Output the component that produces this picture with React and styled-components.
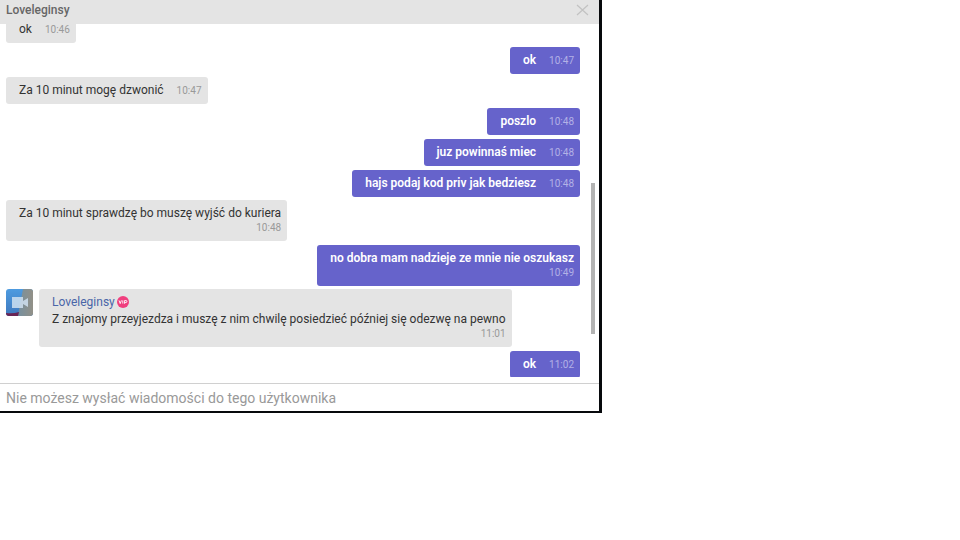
import React from "react";
import styled, { createGlobalStyle } from "styled-components";

const GlobalStyle = createGlobalStyle`
  * {
    box-sizing: border-box;
  }

  body {
    margin: 0;
    background: #fff;
    font-family: Roboto, "Noto Sans", sans-serif;
    font-size: 12px;
    line-height: 16px;
  }
`;

// chat window
const ChatWindow = styled.main`
  display: flex;
  flex-direction: column;
  width: 100%;
  max-width: 602px;
  background: #fff;
  border-right: 3px solid #07090c;
  border-bottom: 2px solid #07090c;
`;

const Header = styled.header`
  position: relative;
  z-index: 1;
  display: flex;
  align-items: center;
  justify-content: space-between;
  height: 24px;
  padding: 0 10px 4px 6px;
  background: #e4e4e4;
`;

const Title = styled.h1`
  margin: 0;
  color: #666;
  font-size: 12px;
  font-weight: 500;
`;

const CloseButton = styled.button`
  display: flex;
  padding: 0;
  border: 0;
  background: none;
  color: #c2c2c2;
  cursor: pointer;
`;

const Viewport = styled.section`
  position: relative;
  margin-bottom: 6px;
  clip-path: inset(-8px 0 0);
`;

// scrolled a little, so the first bubble slides under the header
const MessageList = styled.ul`
  display: flex;
  flex-direction: column;
  gap: 4px;
  margin: -7px 0 -1px;
  padding: 0 19px 0 6px;
  list-style: none;
`;

const ScrollThumb = styled.div`
  position: absolute;
  top: 45%;
  right: 4px;
  bottom: 43px;
  width: 4px;
  background: #b3b3b3;
`;

const MessageRow = styled.li`
  display: flex;
  align-items: flex-start;
  gap: 6px;
  justify-content: ${(props) => (props.$own ? "flex-end" : "flex-start")};
  margin-top: ${(props) => (props.$own ? "0" : "-1px")};
`;

const Bubble = styled.div`
  display: flex;
  flex-direction: ${(props) => (props.$stacked ? "column" : "row")};
  column-gap: 13px;
  padding: 5px 6px 6px 13px;
  border-radius: 3px;
  background: ${(props) => (props.$own ? "#6663cb" : "#e4e4e4")};
  color: ${(props) => (props.$own ? "#fff" : "#333")};
  font-weight: ${(props) => (props.$own ? 600 : 400)};
`;

const Text = styled.p`
  margin: 0;
`;

const Time = styled.time`
  align-self: flex-end;
  height: ${(props) => (props.$stacked ? "14px" : "16px")};
  color: ${(props) => (props.$own ? "#b3b1e6" : "#999")};
  font-size: 10px;
  font-weight: 400;
  line-height: ${(props) => (props.$stacked ? "14px" : "18px")};
`;

const Author = styled.div`
  display: flex;
  align-items: center;
  gap: 2px;
  height: 17px;
  padding-bottom: 2px;
  color: #4a66a8;
`;

const Avatar = styled.svg`
  flex: none;
  border-radius: 3px;
`;

const Composer = styled.footer`
  border-top: 1px solid #d0d0d0;
`;

const MessageInput = styled.input`
  display: block;
  width: 100%;
  height: 27px;
  padding: 0 6px;
  border: 0;
  background: #fff;
  font: 14px Roboto, "Noto Sans", sans-serif;

  &::placeholder {
    color: #999;
    opacity: 1;
  }
`;

const messages = [
  { text: "ok", time: "10:46" },
  { text: "ok", time: "10:47", own: true },
  { text: "Za 10 minut mogę dzwonić", time: "10:47" },
  { text: "poszlo", time: "10:48", own: true },
  { text: "juz powinnaś miec", time: "10:48", own: true },
  { text: "hajs podaj kod priv jak bedziesz", time: "10:48", own: true },
  {
    text: "Za 10 minut sprawdzę bo muszę wyjść do kuriera",
    time: "10:48",
    stacked: true,
  },
  {
    text: "no dobra mam nadzieje ze mnie nie oszukasz",
    time: "10:49",
    own: true,
    stacked: true,
  },
  {
    text: "Z znajomy przeyjezdza i muszę z nim chwilę posiedzieć później się odezwę na pewno",
    time: "11:01",
    author: "Loveleginsy",
    stacked: true,
  },
  { text: "ok", time: "11:02", own: true },
];

const CameraAvatar = () => (
  <Avatar width="27" height="27" viewBox="0 0 27 27" aria-hidden="true">
    <defs>
      <linearGradient id="sky" x1="0" y1="0" x2="0" y2="1">
        <stop offset="0" stopColor="#4d9be0" />
        <stop offset="1" stopColor="#3e78bd" />
      </linearGradient>
      <linearGradient id="wall" x1="0" y1="0" x2="1" y2="0">
        <stop offset="0" stopColor="#76909f" />
        <stop offset="1" stopColor="#929087" />
      </linearGradient>
    </defs>
    <rect width="27" height="27" fill="url(#sky)" />
    <path d="M17 0h10v27H12l2-12z" fill="url(#wall)" />
    <path d="M0 24q7 1 13-1l-1 4H0z" fill="#692454" />
    <path d="M6 8h11v4l5-3v9l-5-3v4H6z" fill="#cfe1f0" opacity="0.85" />
  </Avatar>
);

const VipBadge = () => (
  <svg width="12" height="12" viewBox="0 0 12 12" role="img" aria-label="VIP">
    <circle cx="6" cy="6" r="6" fill="#f03f7e" />
    <path
      d="M2 4.4l1.2 3.2 1.2-3.2M5.8 4.4v3.2M7.6 7.8V4.5h1.3a1 1 0 0 1 0 2H7.6"
      fill="none"
      stroke="#fff"
      strokeWidth="0.9"
    />
  </svg>
);

const Message = ({ text, time, own, author, stacked }) => (
  <MessageRow $own={own}>
    {author && <CameraAvatar />}
    <Bubble $own={own} $stacked={stacked}>
      {author && (
        <Author>
          {author}
          <VipBadge />
        </Author>
      )}
      <Text>{text}</Text>
      <Time $own={own} $stacked={stacked}>
        {time}
      </Time>
    </Bubble>
  </MessageRow>
);

const App = () => {
  return (
    <>
      <GlobalStyle />
      <ChatWindow>
        <Header>
          <Title>Loveleginsy</Title>
          <CloseButton type="button" aria-label="Zamknij">
            <svg width="13" height="12" viewBox="0 0 13 12">
              <path
                d="M1 1l11 10M12 1L1 11"
                stroke="currentColor"
                strokeWidth="1.2"
              />
            </svg>
          </CloseButton>
        </Header>

        <Viewport>
          <MessageList>
            {messages.map((message, index) => (
              <Message key={index} {...message} />
            ))}
          </MessageList>
          <ScrollThumb />
        </Viewport>

        <Composer>
          <MessageInput
            type="text"
            aria-label="Wiadomość"
            placeholder="Nie możesz wysłać wiadomości do tego użytkownika"
            readOnly
          />
        </Composer>
      </ChatWindow>
    </>
  );
};

export default App;
